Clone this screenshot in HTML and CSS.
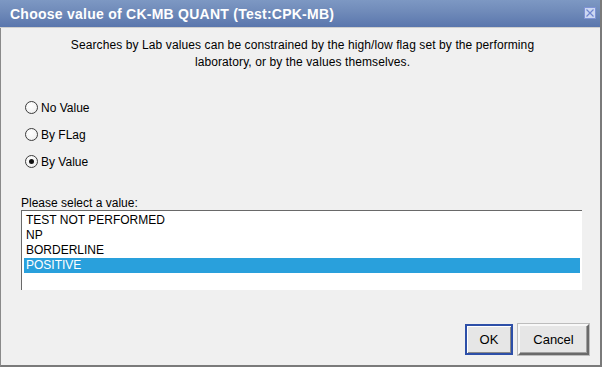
FILE: index.html
```html
<!DOCTYPE html>
<html>
<head>
<meta charset="utf-8">
<link rel="stylesheet" href="styles.css">
</head>
<body>
<div class="window">
  <div class="titlebar">
    <span class="title">Choose value of CK-MB QUANT (Test:CPK-MB)</span>
    <span class="close"><svg width="12" height="12" viewBox="0 0 12 12"><rect x="0.5" y="0.5" width="11" height="11" fill="#cdd8f2" stroke="#7f93d6"/><path d="M2.5 2.5 L9.5 9.5 M9.5 2.5 L2.5 9.5" stroke="#6f86d0" stroke-width="1.2"/></svg></span>
  </div>
  <div class="content">
    <p class="desc">Searches by Lab values can be constrained by the high/low flag set by the performing<br>laboratory, or by the values themselves.</p>
    <div class="radios">
      <label class="radio"><input type="radio" name="mode"><span>No Value</span></label>
      <label class="radio"><input type="radio" name="mode"><span>By FLag</span></label>
      <label class="radio"><input type="radio" name="mode" checked><span>By Value</span></label>
    </div>
    <div class="select-label">Please select a value:</div>
    <div class="listbox">
      <div class="item">TEST NOT PERFORMED</div>
      <div class="item">NP</div>
      <div class="item">BORDERLINE</div>
      <div class="item selected">POSITIVE</div>
    </div>
    <div class="buttons">
      <button class="btn btn-default">OK</button>
      <button class="btn">Cancel</button>
    </div>
  </div>
</div>
</body>
</html>
```

FILE: styles.css
```css
html, body {
  margin: 0;
  padding: 0;
  background: #f0f0f0;
}
body {
  font-family: "Liberation Sans", Arial, sans-serif;
  font-size: 12px;
  color: #000;
}
.window {
  width: 602px;
  height: 367px;
  box-sizing: border-box;
  border-left: 1px solid #8a8a8a;
  border-right: 2px solid #7a7a7a;
  border-bottom: 2px solid #7a7a7a;
  background: #f0f0f0;
  display: flex;
  flex-direction: column;
}
.titlebar {
  height: 27px;
  flex: none;
  background: linear-gradient(to bottom, #7d98c3 0%, #6f8ab9 45%, #5a76ad 100%);
  border-bottom: 1px solid #cfcfcf;
  display: flex;
  align-items: center;
  justify-content: space-between;
  padding: 0 4px 0 10px;
  margin-left: -1px;
}
.title {
  color: #fff;
  font-weight: bold;
  font-size: 14px;
  letter-spacing: 0.25px;
  margin-top: 1px;
}
.close {
  display: flex;
  width: 12px;
  height: 12px;
  margin-top: -2px;
}
.content {
  flex: 1;
  display: flex;
  flex-direction: column;
  padding: 0 11px 10px 20px;
}
.desc {
  margin: 9px 0 0;
  text-align: center;
  line-height: 17px;
  letter-spacing: 0.1px;
  padding-left: 2px;
  padding-right: 7px;
}
.radios {
  margin-top: 23px;
  padding-left: 4px;
  display: flex;
  flex-direction: column;
}
.radio {
  height: 27px;
  display: flex;
  align-items: center;
  gap: 3px;
}
.radio input {
  appearance: none;
  -webkit-appearance: none;
  margin: 0;
  width: 13px;
  height: 13px;
  border-radius: 50%;
  border: 1px solid #3c3c3c;
  background: radial-gradient(circle at 40% 35%, #ffffff 0%, #f4f4f4 60%, #dcdcdc 100%);
  box-sizing: border-box;
  position: relative;
}
.radio input:checked::after {
  content: "";
  position: absolute;
  left: 3px;
  top: 3px;
  width: 5px;
  height: 5px;
  border-radius: 50%;
  background: #111;
}
.select-label {
  margin-top: 21px;
  line-height: 15px;
}
.listbox {
  width: 561px;
  height: 80px;
  box-sizing: border-box;
  background: #fff;
  border-top: 1px solid #696969;
  border-left: 1px solid #696969;
  padding: 2px 2px 0 2px;
  margin-top: -1px;
}
.item {
  height: 15px;
  line-height: 15px;
  padding-left: 2px;
}
.item.selected {
  background: #29a0dc;
  color: #fff;
}
.buttons {
  margin-top: auto;
  display: flex;
  justify-content: flex-end;
  gap: 5px;
}
.btn {
  font-family: "Liberation Sans", Arial, sans-serif;
  font-size: 13px;
  height: 31px;
  box-sizing: border-box;
  background: #e6e6e6;
  color: #000;
  border: 2px solid;
  border-color: #f8f8f8 #6a6a6a #6a6a6a #f8f8f8;
  box-shadow: inset -1px -1px 0 #a0a0a0, 0 0 0 1px #bdbdbd;
  padding: 0;
  width: 71px;
}
.btn-default {
  width: 48px;
  border-color: #2d4fa8;
  box-shadow: inset 1px 1px 0 #ffffff, inset -1px -1px 0 #8a8a8a;
}
```
